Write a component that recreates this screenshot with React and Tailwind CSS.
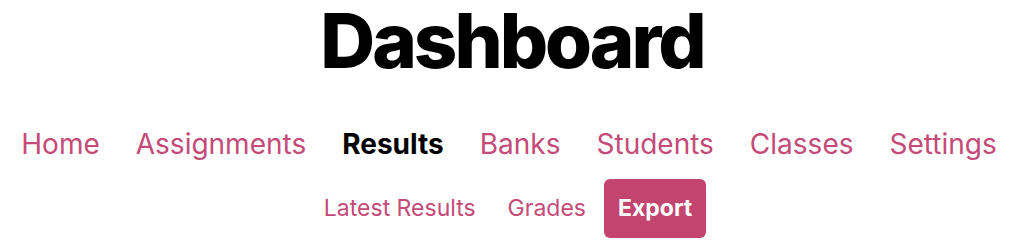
import React from "react";

const mainLinks = ["Home", "Assignments", "Results", "Banks", "Students", "Classes", "Settings"];
const subLinks = ["Latest Results", "Grades", "Export"];

export default function App() {
  const active = "Results";
  const activeSub = "Export";
  return (
    <div className="w-full h-[252px] bg-white flex flex-col items-center font-['Inter',sans-serif]">
      <h1 className="text-[76px] leading-[92px] font-extrabold tracking-[-0.04em] text-black -mt-[6px]">
        Dashboard
      </h1>
      <nav className="flex justify-center mt-[40px] mr-[6px]">
        {mainLinks.map((l) => (
          <a
            key={l}
            href="#"
            className={`px-[18px] text-[28px] leading-[36px] ${
              l === active ? "font-bold text-black" : "text-[#c44a78]"
            }`}
          >
            {l}
          </a>
        ))}
      </nav>
      <nav className="flex justify-center items-center mt-[17px] mr-[10px]">
        {subLinks.map((l) =>
          l === activeSub ? (
            <a
              key={l}
              href="#"
              className="ml-[2px] px-[14px] h-[59px] flex items-center rounded-[6px] bg-[#c2446f] text-white font-bold text-[23px]"
            >
              {l}
            </a>
          ) : (
            <a key={l} href="#" className="px-4 text-[23px] text-[#c44a78]">
              {l}
            </a>
          )
        )}
      </nav>
    </div>
  );
}
